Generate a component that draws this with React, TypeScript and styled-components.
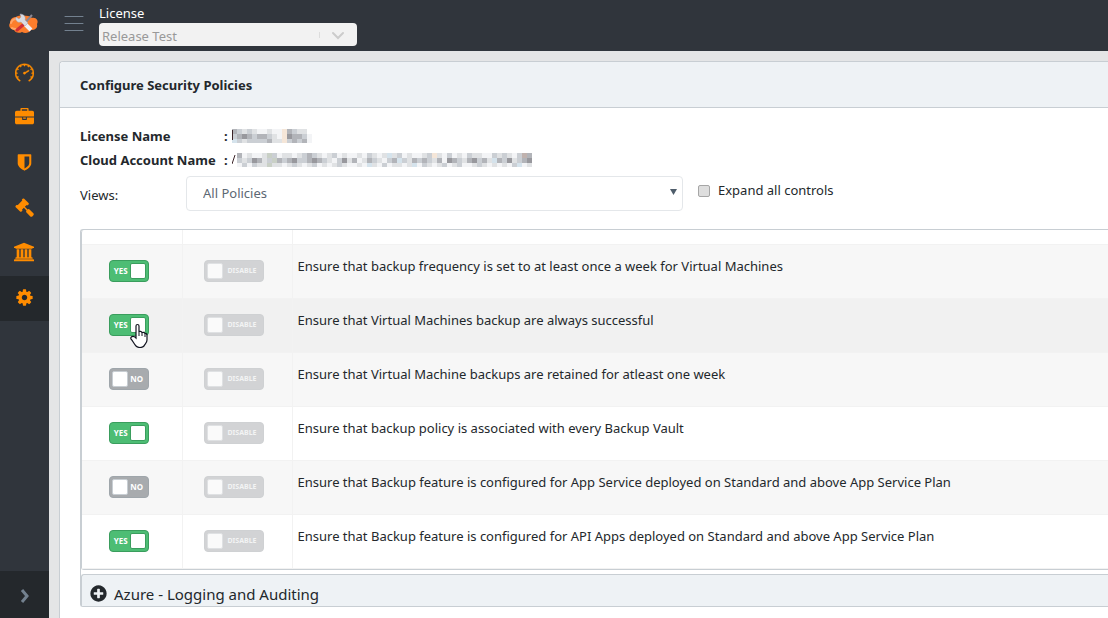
import React from "react";
import styled, { createGlobalStyle, css } from "styled-components";
import { SlSpeedometer } from "react-icons/sl";

const Global = createGlobalStyle`
  *, *::before, *::after { box-sizing: border-box; }
  body { margin: 0; background: #e4e5e6; color: #23282c; font: 13px/21px "Noto Sans", "Open Sans", sans-serif; }
`;

const Page = styled.div`
  display: grid;
  grid-template-columns: 49px minmax(0, 1fr);
  height: 100vh;
  overflow: hidden;
`;

const Sidebar = styled.nav`
  display: flex;
  flex-direction: column;
  background: #30353c;
`;

const Brand = styled.a`
  display: flex;
  align-items: center;
  height: 51px;
  padding: 0 0 3px 8px;
`;

const NavLink = styled.a<{ $active?: boolean }>`
  display: flex;
  align-items: center;
  justify-content: center;
  height: 45px;
  padding: 0 1px 3px 0;
  color: #ff8c00;
  background: ${(p) => (p.$active ? "#24282c" : "transparent")};
`;

const Minimizer = styled.button`
  display: flex;
  align-items: center;
  justify-content: center;
  height: 47px;
  margin-top: auto;
  padding: 3px 0 0;
  border: 0;
  background: #24282c;
`;

const Column = styled.div`
  display: flex;
  flex-direction: column;
  min-height: 0;
`;

const TopBar = styled.header`
  display: flex;
  flex: none;
  height: 51px;
  gap: 15px;
  padding-left: 15px;
  background: #30353c;
`;

const MenuButton = styled.button`
  display: flex;
  padding: 15px 0 0;
  border: 0;
  background: none;
`;

const LicenseField = styled.label`
  display: flex;
  flex-direction: column;
  width: 258px;
  padding-top: 3px;
  line-height: 20px;
  color: #fff;
`;

const LicenseBox = styled.span`
  display: grid;
  align-items: center;
  height: 23px;
  border-radius: 4px;
  background: #f2f2f2;
  > * { grid-area: 1 / 1; }
  > svg { justify-self: end; }
`;

const LicenseSelect = styled.select`
  appearance: none;
  width: 100%;
  padding: 2px 3px 0;
  border: 0;
  background: none;
  color: #999;
  opacity: 1;
  font: inherit;
`;

const Main = styled.main`
  display: flex;
  flex: 1;
  padding: 10px 0 0 10px;
  min-height: 0;
`;

const Card = styled.section`
  flex: 1;
  min-width: 0;
  border: 1px solid #c8ced3;
  border-width: 1px 0 0 1px;
  border-radius: 4px 0 0 0;
  background: #fff;
`;

const CardHeader = styled.h1`
  margin: 0;
  padding: 12px 20px 11px;
  border-bottom: 1px solid #c8ced3;
  border-radius: 4px 0 0 0;
  background: #eef2f5;
  font-size: 13px;
  line-height: 22px;
  font-weight: 700;
`;

const CardBody = styled.div`
  padding: 16px 0 0 20px;
`;

const Details = styled.dl`
  display: grid;
  grid-template-columns: 144px 1fr;
  margin: 0;
  line-height: 24px;
  font-weight: 700;
`;

const Term = styled.dt`
  white-space: nowrap;
`;

const Value = styled.dd`
  display: flex;
  align-items: center;
  gap: 4px;
  margin: 0;
`;

const Filters = styled.div`
  display: flex;
  align-items: center;
  height: 35px;
  margin-top: 4px;
`;

const ViewsLabel = styled.label`
  width: 106px;
  padding-top: 3px;
`;

const ViewsBox = styled.span`
  display: grid;
  align-items: center;
  width: 54%;
  max-width: 497px;
  > * { grid-area: 1 / 1; }
  > svg { justify-self: end; margin: 0 6px 3px 0; pointer-events: none; }
`;

const ViewsSelect = styled.select`
  appearance: none;
  width: 100%;
  height: 35px;
  padding: 0 16px;
  border: 1px solid #e4e7ea;
  border-radius: 4px;
  background: #fff;
  color: #5c6873;
  font: inherit;
`;

const Expand = styled.label`
  display: flex;
  align-items: center;
  gap: 8px;
  margin-left: 15px;
  padding-bottom: 6px;
`;

const TickBox = styled.input`
  appearance: none;
  width: 12px;
  height: 12px;
  margin: 0;
  border: 1px solid #a6a6a6;
  border-radius: 2px;
  background: #dedede;
`;

const Groups = styled.div`
  margin-top: 18px;
  border: 1px solid #c8ced3;
  border-right: 0;
  border-radius: 3px 0 0 3px;
`;

const PolicyPanel = styled.div`
  border: 1px solid #c8ced3;
  border-width: 0 0 1px 1px;
  border-radius: 3px 0 0 3px;
`;

const PolicyTable = styled.table`
  width: 100%;
  border-collapse: collapse;
  table-layout: fixed;
`;

const Row = styled.tr<{ $tone: string }>`
  height: 54px;
  background: ${(p) => p.$tone};
`;

const SpacerRow = styled.tr`
  height: 14px;
`;

const Cell = styled.td`
  padding: 0 6px 0 0;
  border-right: 1px solid #f2f2f2;
  border-bottom: 1px solid #f2f2f2;
  text-align: center;
`;

const PolicyName = styled.td`
  padding: 0 5px 10px;
  border-bottom: 1px solid #f2f2f2;
`;

const Toggle = styled.label<{ $on: boolean; $muted?: boolean }>`
  position: relative;
  display: inline-flex;
  flex-direction: ${(p) => (p.$on ? "row-reverse" : "row")};
  align-items: center;
  width: ${(p) => (p.$muted ? 60 : 40)}px;
  height: 22px;
  padding: 0 2px;
  border: 1px solid ${(p) => (p.$on ? "#3a9d5d" : "#9fa6ab")};
  border-radius: 4px;
  background: ${(p) => (p.$on ? "#4dbd74" : "#a8abae")};
  color: #fff;
  font-size: 8px;
  line-height: 16px;
  font-weight: 700;
  vertical-align: middle;
  ${(p) => p.$muted && css`
    border-color: #cfd1d3;
    background: #d2d3d5;
    color: #f3f4f4;
    font-size: 7px;
  `}
  > span { flex: 1; text-align: center; }
`;

const Knob = styled.input<{ $on: boolean; $muted?: boolean }>`
  appearance: none;
  flex: none;
  width: 16px;
  height: 16px;
  margin: 0;
  border: 1px solid ${(p) => (p.$on ? "#3a9d5d" : p.$muted ? "#dfe1e3" : "#c8ced3")};
  border-radius: 2px;
  background: ${(p) => (p.$muted ? "#fafafa" : "#fff")};
`;

const Pointer = styled.svg`
  position: absolute;
  left: 20px;
  top: 8px;
  z-index: 1;
  pointer-events: none;
`;

const GroupButton = styled.button`
  display: flex;
  align-items: flex-start;
  gap: 6px;
  width: 100%;
  height: 32px;
  margin-top: 4px;
  padding: 9px 7px 0;
  border: 1px solid #c8ced3;
  border-width: 1px 0 0 1px;
  border-radius: 3px 0 0 0;
  background: #eef2f5;
  color: #23282c;
  font: inherit;
  font-size: 15px;
  line-height: 21px;
`;

const shapes = {
  briefcase: "M640 256h512v-128h-512v128zm1152 640v480q0 66-47 113t-113 47h-1472q-66 0-113-47t-47-113v-480h672v160q0 26 19 45t45 19h320q26 0 45-19t19-45v-160h672zm-768 0v128h-256v-128h256zm768-480v384h-1792v-384q0-66 47-113t113-47h352v-160q0-40 28-68t68-28h576q40 0 68 28t28 68v160h352q66 0 113 47t47 113z",
  shield: "M1344 960v-640h-448v1137q119-63 213-137 235-184 235-360zm192-768v768q0 86-33.5 170.5t-83 150-118 127.5-126.5 103-121 77.5-89.5 49.5-42.5 20q-12 6-26 6t-26-6q-16-7-42.5-20t-89.5-49.5-121-77.5-126.5-103-118-127.5-83-150-33.5-170.5v-768q0-26 19-45t45-19h1152q26 0 45 19t19 45z",
  gavel: "M1771 1536q0 53-37 90l-107 108q-39 37-91 37-53 0-90-37l-363-364q-38-36-38-90 0-53 43-96l-256-256-126 126q-14 14-34 14t-34-14q2 2 12.5 12t12.5 13 10 11.5 10 13.5 6 13.5 5.5 16.5 1.5 18q0 38-28 68-3 3-16.5 18t-19 20.5-18.5 16.5-22 15.5-22 9-26 4.5q-40 0-68-28l-408-408q-28-28-28-68 0-13 4.5-26t9-22 15.5-22 16.5-18.5 20.5-19 18-16.5q30-28 68-28 10 0 18 1.5t16.5 5.5 13.5 6 13.5 10 11.5 10 13 12.5 12 12.5q-14-14-14-34t14-34l348-348q14-14 34-14t34 14q-2-2-12.5-12t-12.5-13-10-11.5-10-13.5-6-13.5-5.5-16.5-1.5-18q0-38 28-68 3-3 16.5-18t19-20.5 18.5-16.5 22-15.5 22-9 26-4.5q40 0 68 28l408 408q28 28 28 68 0 13-4.5 26t-9 22-15.5 22-16.5 18.5-20.5 19-18 16.5q-30 28-68 28-10 0-18-1.5t-16.5-5.5-13.5-6-13.5-10-11.5-10-13-12.5-12-12.5q14 14 14 34t-14 34l-126 126 256 256q43-43 96-43 52 0 91 37l363 363q37 39 37 91z",
  bank: "M960 0l960 384v128h-128q0 26-20.5 45t-48.5 19h-1526q-28 0-48.5-19t-20.5-45h-128v-128zm-704 640h256v768h128v-768h256v768h128v-768h256v768h128v-768h256v768h59q28 0 48.5 19t20.5 45v64h-1664v-64q0-26 20.5-45t48.5-19h59v-768zm1595 960q28 0 48.5 19t20.5 45v128h-1920v-128q0-26 20.5-45t48.5-19h1782z",
  cog: "M1152 896q0-106-75-181t-181-75-181 75-75 181 75 181 181 75 181-75 75-181zm512-109v222q0 12-8 23t-20 13l-185 28q-19 54-39 91 35 50 107 138 10 12 10 25t-9 23q-27 37-99 108t-94 71q-12 0-26-9l-138-108q-44 23-91 38-16 136-29 186-7 28-36 28h-222q-14 0-24.5-8.5t-11.5-21.5l-28-184q-49-16-90-37l-141 107q-10 9-25 9-14 0-25-11-126-114-165-168-7-10-7-23 0-12 8-23 15-21 51-66.5t54-70.5q-27-50-41-99l-183-27q-13-2-21-12.5t-8-23.5v-222q0-12 8-23t19-13l186-28q14-46 39-92-40-57-107-138-10-12-10-24 0-10 9-23 26-36 98.5-107.5t94.5-71.5q13 0 26 10l138 107q44-23 91-38 16-136 29-186 7-28 36-28h222q14 0 24.5 8.5t11.5 21.5l28 184q49 16 90 37l142-107q9-9 24-9 13 0 25 10 129 119 165 170 7 8 7 22 0 12-8 23-15 21-51 66.5t-54 70.5q26 50 41 98l183 28q13 2 21 12.5t8 23.5z",
  plus: "M1344 960v-128q0-26-19-45t-45-19h-256v-256q0-26-19-45t-45-19h-128q-26 0-45 19t-19 45v256h-256q-26 0-45 19t-19 45v128q0 26 19 45t45 19h256v256q0 26 19 45t45 19h128q26 0 45-19t19-45v-256h256q26 0 45-19t19-45zm320-64q0 209-103 385.5t-279.5 279.5-385.5 103-385.5-103-279.5-279.5-103-385.5 103-385.5 279.5-279.5 385.5-103 385.5 103 279.5 279.5 103 385.5z",
};

const Icon = ({ name, size = 19 }: { name: keyof typeof shapes; size?: number }) => (
  <svg width={size} height={size} viewBox={name === "bank" ? "0 0 1920 1792" : "0 0 1792 1792"} fill="currentColor" aria-hidden="true">
    <path d={shapes[name]} />
  </svg>
);

const Logo = () => (
  <svg width="31" height="22" viewBox="0 0 31 22" aria-hidden="true">
    <path d="M8 4C11 2 21 2 24 5c4-1 7 3 5 6 1 4-2 6-6 6-2 3-6 4-9 2-4 2-7 0-8-2-4-1-6-4-4-7 0-4 3-6 6-6z" fill="#fc7d2c" />
    <path d="M3 10c1-3 3-4 5-4M4 15c1 1 2 1 4 1" stroke="#ffa568" strokeWidth="2" fill="none" strokeLinecap="round" />
    <path d="M17 11l6 6" stroke="#f1eff2" strokeWidth="4" />
    <path d="M15 12l-6 5" stroke="#d22f35" strokeWidth="3" strokeLinecap="round" />
    <path d="M24 2l-8 9" stroke="#8b8793" strokeWidth="2" />
    <path d="M12 1c4 0 6 3 5 6l3 3-3 3-4-4c-3 1-6-1-5-5l3 2 2-2z" fill="#d9dbe2" stroke="#a4a3ad" strokeWidth="0.5" />
  </svg>
);

/* Redacted values are shown as a mosaic of 5px tiles; a sliver of the first letter stays visible. */
const palette: Record<string, string> = {
  a: "#f3f4f6", b: "#e0e2e4", c: "#cbcfd4", d: "#b2b4b9", e: "#98989d", f: "#d5e3ec", g: "#f5e6d8", h: "#c0b2ae", i: "#c9d0c6",
};

const Mosaic = ({ rows, label, edge }: { rows: string[]; label: string; edge: string }) => (
  <svg width={rows[0].length * 5} height="14" role="img" aria-label={label}>
    <g shapeRendering="crispEdges">
      {rows.flatMap((row, y) =>
        [...row].map((tone, x) =>
          palette[tone] ? <rect key={`${x}-${y}`} x={x * 5} y={y * 5} width="5" height="5" fill={palette[tone]} /> : null
        )
      )}
    </g>
    <path d={edge} stroke="#3b2327" />
  </svg>
);

const Policy = ({ name, on, tone, pointed }: { name: string; on: boolean; tone: string; pointed?: boolean }) => (
  <Row $tone={tone}>
    <Cell>
      <Toggle $on={on}>
        <Knob type="checkbox" defaultChecked={on} $on={on} />
        <span>{on ? "YES" : "NO"}</span>
        {pointed && (
          <Pointer width="18" height="25" viewBox="0 0 18 25" aria-hidden="true">
            <path d="M6 14V3c0-2 3-2 3 0v6c0-1 3-1 3 1 0-1 3-1 3 1 0-1 2-1 2 1v5c0 3-2 4-3 6-2 2-6 2-8 0-2-2-3-5-5-7-1-2 2-4 5-1z" fill="#fff" stroke="#11131f" strokeWidth="1.2" />
            <path d="M9 9v4M12 10v3M15 11v3" stroke="#11131f" />
          </Pointer>
        )}
      </Toggle>
    </Cell>
    <Cell>
      <Toggle $on={false} $muted>
        <Knob type="checkbox" disabled $on={false} $muted />
        <span>DISABLE</span>
      </Toggle>
    </Cell>
    <PolicyName>{name}</PolicyName>
  </Row>
);

const policies = [
  { name: "Ensure that backup frequency is set to at least once a week for Virtual Machines", on: true, tone: "#f7f7f7" },
  { name: "Ensure that Virtual Machines backup are always successful", on: true, tone: "#f1f1f1", pointed: true },
  { name: "Ensure that Virtual Machine backups are retained for atleast one week", on: false, tone: "#f7f7f7" },
  { name: "Ensure that backup policy is associated with every Backup Vault", on: true, tone: "#fff" },
  { name: "Ensure that Backup feature is configured for App Service deployed on Standard and above App Service Plan", on: false, tone: "#f7f7f7" },
  { name: "Ensure that Backup feature is configured for API Apps deployed on Standard and above App Service Plan", on: true, tone: "#fff" },
];

export default function App() {
  return (
    <Page>
      <Global />
      <Sidebar>
        <Brand href="#" aria-label="Home"><Logo /></Brand>
        <NavLink href="#" aria-label="Dashboard"><SlSpeedometer size={19} strokeWidth={20} stroke="currentColor" /></NavLink>
        <NavLink href="#" aria-label="Accounts"><Icon name="briefcase" /></NavLink>
        <NavLink href="#" aria-label="Security"><Icon name="shield" /></NavLink>
        <NavLink href="#" aria-label="Policies"><Icon name="gavel" /></NavLink>
        <NavLink href="#" aria-label="Compliance"><Icon name="bank" size={20} /></NavLink>
        <NavLink href="#" aria-label="Settings" $active><Icon name="cog" /></NavLink>
        <Minimizer aria-label="Expand sidebar">
          <svg width="10" height="16" viewBox="0 0 10 16"><path d="M2 2l5 6-5 6" fill="none" stroke="#73818f" strokeWidth="3" /></svg>
        </Minimizer>
      </Sidebar>
      <Column>
        <TopBar>
          <MenuButton aria-label="Toggle menu">
            <svg width="20" height="17" viewBox="0 0 20 17"><path d="M1 1.5h18M1 8.5h18M1 15.5h18" stroke="#73818f" strokeLinecap="round" /></svg>
          </MenuButton>
          <LicenseField>
            License
            <LicenseBox>
              <LicenseSelect disabled><option>Release Test</option></LicenseSelect>
              <svg width="38" height="23" viewBox="0 0 38 23" aria-hidden="true">
                <path d="M.5 9v6" stroke="#ddd" /><path d="M14 10l5 5 5-5" fill="none" stroke="#ccc" strokeWidth="2" strokeLinecap="round" />
              </svg>
            </LicenseBox>
          </LicenseField>
        </TopBar>
        <Main>
          <Card>
            <CardHeader>Configure Security Policies</CardHeader>
            <CardBody>
              <Details>
                <Term>License Name</Term>
                <Value>: <Mosaic label="Hidden license name" edge="M.5 1v10" rows={["dcbcbaabaagdcbb ", "cdedcddcbageddca", "fcbccccdbbgcdcda"]} /></Value>
                <Term>Cloud Account Name</Term>
                <Value>: <Mosaic label="Hidden account name" edge="M0 11L3 2" rows={[" dabaabicabbabcdcbabcabaabacbabfbcabaabcgbacabacbbaacbcbachd", " cbcedbcidcdeccdedcbacebdabdcbacdfcbdcdcbdaedcbdecdbfdcebcde", " acacbbibbabcbabcababcbaabafbacabbabfacbabcabcaabcbababacfab"]} /></Value>
              </Details>
              <Filters>
                <ViewsLabel htmlFor="views">Views:</ViewsLabel>
                <ViewsBox>
                  <ViewsSelect id="views"><option>All Policies</option></ViewsSelect>
                  <svg width="7" height="6" viewBox="0 0 7 6" aria-hidden="true"><path d="M0 0h7L3.5 6z" fill="#4f5d6b" /></svg>
                </ViewsBox>
                <Expand><TickBox type="checkbox" />Expand all controls</Expand>
              </Filters>
              <Groups>
                <PolicyPanel>
                  <PolicyTable>
                    <colgroup><col width="100" /><col width="110" /><col /></colgroup>
                    <tbody>
                      <SpacerRow><Cell /><Cell /><PolicyName /></SpacerRow>
                      {policies.map((p) => <Policy key={p.name} {...p} />)}
                    </tbody>
                  </PolicyTable>
                </PolicyPanel>
                <GroupButton><Icon name="plus" />Azure - Logging and Auditing</GroupButton>
              </Groups>
            </CardBody>
          </Card>
        </Main>
      </Column>
    </Page>
  );
}
